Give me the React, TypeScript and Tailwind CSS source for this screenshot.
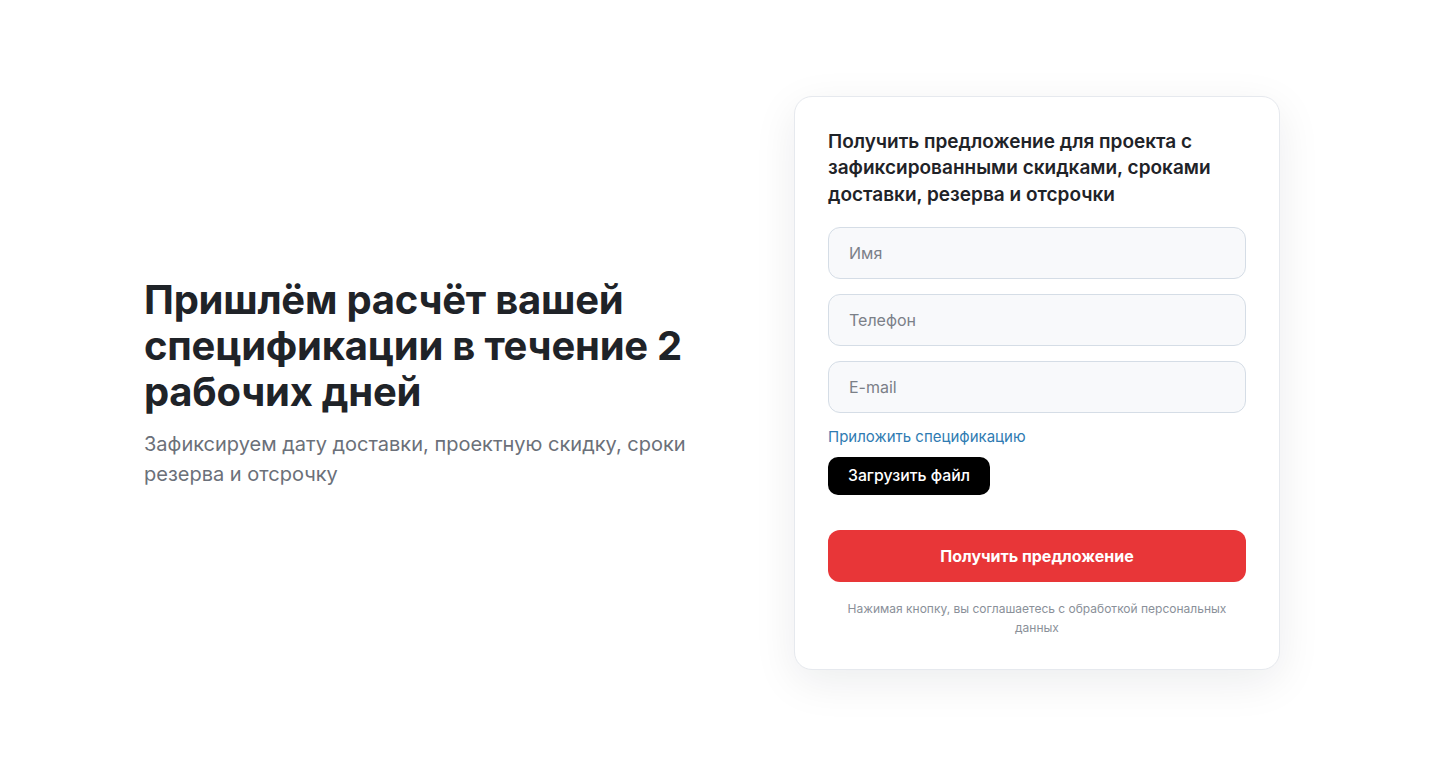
import React, { useState } from 'react';

export default function App() {
  const [name, setName] = useState('');
  const [phone, setPhone] = useState('');
  const [email, setEmail] = useState('');

  const inputCls =
    'w-full h-[52px] rounded-xl border border-[#d5dde6] bg-[#f8f9fb] px-[20px] text-base text-[#1f2328] placeholder-[#7b8088] outline-none focus:border-[#9fb3c8]';

  return (
    <div
      className="min-h-screen bg-white flex items-center"
      style={{ fontFamily: 'Inter, "Noto Sans", sans-serif' }}
    >
      <div className="w-full pl-[144px] pr-[160px] flex items-center justify-between">
        {/* Left intro */}
        <div className="w-[560px]">
          <h1 className="text-[40px] leading-[46px] font-bold tracking-[-0.006em] text-[#1f2328]">
            Пришлём расчёт вашей спецификации в течение 2 рабочих дней
          </h1>
          <p className="mt-[14px] text-[20px] leading-[30px] text-[#6b7079]">
            Зафиксируем дату доставки, проектную скидку, сроки резерва и отсрочку
          </p>
        </div>

        {/* Request form card */}
        <div className="w-[486px] rounded-[18px] border border-[#e6e9ee] bg-white px-[33px] pt-[32px] pb-[32px] shadow-[0_12px_44px_rgba(15,23,42,0.08)]">
          <h2 className="text-[19px] leading-[26.5px] font-semibold text-[#1f2328]">
            Получить предложение для проекта с зафиксированными скидками, сроками доставки, резерва и отсрочки
          </h2>

          <div className="mt-[19px] flex flex-col gap-[15px]">
            <input className={inputCls} placeholder="Имя" value={name} onChange={(e) => setName(e.target.value)} />
            <input className={inputCls} placeholder="Телефон" value={phone} onChange={(e) => setPhone(e.target.value)} />
            <input className={inputCls} placeholder="E-mail" value={email} onChange={(e) => setEmail(e.target.value)} />
          </div>

          <div className="mt-[14px] text-[15px] leading-[20px] text-[#2f7bb2]">Приложить спецификацию</div>
          <button className="mt-[10px] h-[38px] px-[20px] rounded-[10px] bg-black text-white text-[15.8px] font-medium">
            Загрузить файл
          </button>

          <button className="mt-[35px] w-full h-[52px] rounded-xl bg-[#e83638] text-white text-base font-bold">
            Получить предложение
          </button>

          <p className="mt-[17px] px-[10px] text-center text-[12px] leading-[19px] text-[#8a9099]">
            Нажимая кнопку, вы соглашаетесь с обработкой персональных данных
          </p>
        </div>
      </div>
    </div>
  );
}
